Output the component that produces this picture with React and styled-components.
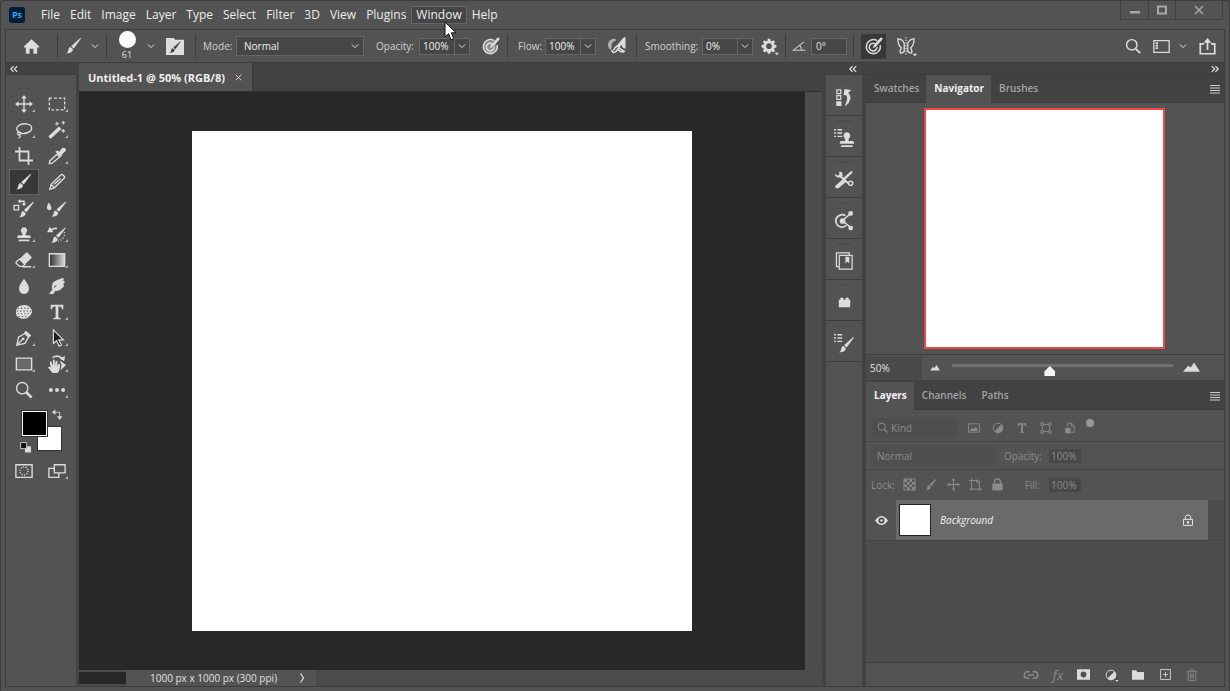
import { useState } from "react"
import styled, { createGlobalStyle } from "styled-components"

const GlobalStyle = createGlobalStyle`
    * { box-sizing: border-box; }
    body {
        margin: 0;
        background: #535353;
        color: #e0e0e0;
        font-family: "Open Sans", "Noto Sans", sans-serif;
        font-size: 10px;
    }
    button, input, select {
        font: inherit;
        color: inherit;
        margin: 0;
        padding: 0;
        border: none;
        border-radius: 0;
        background: none;
        outline: none;
    }
    svg { display: block; flex: none; overflow: visible; }
`

const AppWindow = styled.div`
    display: flex;
    flex-direction: column;
    height: 100vh;
    min-height: 620px;
    background: #535353;
    border: 1px solid #3c3c3c;
    border-bottom: none;
    border-radius: 3px 3px 0 0;
    overflow: hidden;
`

const TitleBar = styled.header`
    display: flex;
    align-items: center;
    height: 28px;
    flex: none;
    padding-left: 8px;
`

const PsLogo = styled.div`
    width: 16px;
    height: 16px;
    border-radius: 3px;
    background: #001e36;
    color: #31a8ff;
    font-size: 9px;
    font-weight: bold;
    line-height: 15px;
    text-align: center;
    margin-right: 11px;
`

const MenuBar = styled.nav`
    display: flex;
    flex: 1;
`

const MenuButton = styled.button`
    position: relative;
    height: 18px;
    padding: 0 4px;
    font-size: 12px;
    line-height: 16px;
    color: #ececec;
    border: 1px solid ${(props)=>props.$active ? "#666" : "transparent"};
    background: ${(props)=>props.$active ? "#464646" : "none"};
`

const Pointer = styled.svg`
    position: absolute;
    left: 32px;
    top: 14px;
    z-index: 5;
`

const WindowButtons = styled.div`
    display: flex;
    align-self: flex-start;
    margin-right: 6px;
    height: 19px;
    border: 1px solid #404040;
    border-top: none;
`

const WindowButton = styled.button`
    display: flex;
    align-items: center;
    justify-content: center;
    width: ${(props)=>props.$wide ? "47px" : "27px"};
    color: #a8a8a8;
    & + & { border-left: 1px solid #404040; }
`

const OptionsBar = styled.div`
    display: flex;
    align-items: center;
    height: 34px;
    flex: none;
    margin: 0 4px;
    padding-right: 8px;
    border: 1px solid #3c3c3c;
`

const OptionGroup = styled.div`
    display: flex;
    align-items: center;
    height: 24px;
    gap: ${(props)=>props.$gap || "8px"};
    padding: 0 ${(props)=>props.$pad || "8px"};
    & + & { border-left: 1px solid #3e3e3e; }
`

const Spacer = styled.div`
    flex: 1;
`

const IconButton = styled.button`
    display: flex;
    align-items: center;
    justify-content: center;
    flex: none;
    width: ${(props)=>props.$width || "auto"};
    color: ${(props)=>props.$dim ? "#8c8c8c" : "#dcdcdc"};
`

const PressedButton = styled(IconButton)`
    width: 25px;
    height: 25px;
    background: #383838;
`

const FxButton = styled(IconButton)`
    width: 20px;
    font-size: 13px;
    font-style: italic;
`

const BrushSize = styled.div`
    display: flex;
    flex-direction: column;
    align-items: center;
    width: 18px;
    font-size: 9px;
    line-height: 13px;
`

const BrushDot = styled.div`
    width: 17px;
    height: 17px;
    border-radius: 50%;
    background: white;
`

const Field = styled.div`
    display: flex;
    align-items: center;
    white-space: nowrap;
`

const FieldLabel = styled.label`
    width: ${(props)=>props.$width};
    text-align: ${(props)=>props.$end ? "right" : "left"};
    color: ${(props)=>props.$dim ? "#8c8c8c" : "#d0d0d0"};
`

const SelectBox = styled.div`
    display: flex;
    align-items: center;
    width: 128px;
    height: 20px;
    padding-right: 4px;
    background: #464646;
    border: 1px solid #666;
`

const SelectInput = styled.select`
    appearance: none;
    flex: 1;
    height: 18px;
    padding-left: 7px;
    color: #f0f0f0;
`

const NumberBox = styled.div`
    display: flex;
    width: 51px;
    height: 17px;
    border: 1px solid #666;
    background: #464646;
    input {
        width: 34px;
        padding-left: 3px;
        color: #f0f0f0;
    }
    button {
        flex: 1;
        border-left: 1px solid #666;
    }
`

const AngleInput = styled.input`
    width: 36px;
    height: 17px;
    padding-left: 4px;
    background: #464646;
    border: 1px solid #666;
`

const Workspace = styled.main`
    display: flex;
    flex: 1;
    min-height: 0;
    margin: 0 4px 4px;
    background: #424242;
    border: 1px solid #3c3c3c;
    border-top: none;
`

const SideColumn = styled.div`
    display: flex;
    flex-direction: column;
    flex: none;
    width: ${(props)=>props.$width};
    padding-left: ${(props)=>props.$gutter ? "4px" : "0"};
`

const CollapseStrip = styled.div`
    display: flex;
    justify-content: ${(props)=>props.$end ? "flex-end" : "flex-start"};
    align-items: center;
    height: 12px;
    flex: none;
    padding: 0 5px 0 4px;
    border-bottom: 1px solid #3a3a3a;
`

const ToolPanel = styled.div`
    flex: 1;
    padding: 16px 3px;
    background: #535353;
`

const ToolGrid = styled.div`
    display: grid;
    grid-template-columns: 30px 30px;
    grid-auto-rows: 26px;
    column-gap: 3px;
`

const ToolButton = styled.button`
    position: relative;
    display: flex;
    align-items: center;
    justify-content: center;
    color: #dcdcdc;
    background: ${(props)=>props.$active ? "#383838" : "none"};
    border: 1px solid ${(props)=>props.$active ? "#636363" : "transparent"};
    &::after {
        content: "";
        display: ${(props)=>props.$more ? "block" : "none"};
        position: absolute;
        right: 3px;
        bottom: 4px;
        border-left: 3px solid transparent;
        border-bottom: 3px solid #b4b4b4;
    }
`

const ColorWell = styled.div`
    position: relative;
    height: 44px;
    margin: 8px 0 3px;
`

const Swatch = styled.button`
    position: absolute;
    left: ${(props)=>props.$front ? "13px" : "28px"};
    top: ${(props)=>props.$front ? "0" : "15px"};
    z-index: ${(props)=>props.$front ? 1 : 0};
    width: 25px;
    height: 25px;
    background: ${(props)=>props.$color};
    border: 1px solid ${(props)=>props.$front ? "#fff" : "#333"};
    outline: ${(props)=>props.$front ? "1px solid #333" : "none"};
`

const SwapButton = styled(IconButton)`
    position: absolute;
    left: 43px;
    top: -2px;
`

const DefaultButton = styled(IconButton)`
    position: absolute;
    left: 11px;
    top: 31px;
`

const DocumentArea = styled.section`
    display: flex;
    flex-direction: column;
    flex: 1;
    min-width: 0;
    margin-left: 3px;
`

const DocumentTab = styled.div`
    display: flex;
    align-items: center;
    align-self: flex-start;
    gap: 10px;
    height: 28px;
    flex: none;
    padding: 0 10px 0 9px;
    background: #535353;
    border-right: 1px solid #3a3a3a;
    color: #f0f0f0;
    font-size: 11px;
    font-weight: 700;
    white-space: nowrap;
`

const CanvasRow = styled.div`
    display: flex;
    flex: 1;
    min-height: 0;
    border-top: 1px solid #303030;
`

const Pasteboard = styled.div`
    display: flex;
    align-items: center;
    justify-content: center;
    flex: 1;
    min-width: 0;
    overflow: hidden;
    background: #282828;
`

const Artboard = styled.div`
    width: 500px;
    height: 500px;
    flex: none;
    background: white;
`

const ScrollTrack = styled.div`
    width: 17px;
    background: #4d4d4d;
`

const StatusBar = styled.footer`
    display: flex;
    align-items: center;
    height: 16px;
    flex: none;
    background: #4b4b4b;
    color: #e0e0e0;
`

const ZoomCell = styled.div`
    width: 47px;
    height: 12px;
    background: #282828;
`

const StatusText = styled.div`
    display: flex;
    align-items: center;
    justify-content: space-between;
    width: 190px;
    height: 16px;
    padding: 0 9px 0 24px;
    background: #535353;
    white-space: nowrap;
`

const Dock = styled.div`
    flex: 1;
    background: #535353;
`

const DockButton = styled.button`
    display: flex;
    flex-direction: column;
    align-items: center;
    width: 100%;
    height: 41px;
    padding-top: 4px;
    gap: 7px;
    color: #dcdcdc;
    border-bottom: 1px solid #3c3c3c;
`

const Grip = styled.span`
    width: 16px;
    height: 2px;
    flex: none;
    border-top: 2px dotted #4a4a4a;
`

const Panel = styled.section`
    display: flex;
    flex-direction: column;
    flex: ${(props)=>props.$grow ? "1" : "none"};
    min-height: 0;
    margin-bottom: ${(props)=>props.$grow ? "0" : "2px"};
    background: #535353;
`

const TabRow = styled.div`
    display: flex;
    height: 28px;
    flex: none;
    background: #424242;
    border-bottom: 1px solid #3c3c3c;
`

const PanelTab = styled.button`
    height: 28px;
    padding: 0 7px 2px 8px;
    font-weight: ${(props)=>props.$active ? 700 : 600};
    color: ${(props)=>props.$active ? "#f2f2f2" : "#a4a4a4"};
    background: ${(props)=>props.$active ? "#535353" : "none"};
`

const PanelMenu = styled(IconButton)`
    margin-left: auto;
    width: 19px;
`

const Preview = styled.div`
    display: flex;
    justify-content: center;
    padding: 5px 2px 5px 0;
`

const PreviewBox = styled.div`
    width: 241px;
    height: 241px;
    background: white;
    border: 2px solid #f24646;
`

const ZoomRow = styled.div`
    display: flex;
    align-items: center;
    height: 26px;
    border-top: 1px solid #3e3e3e;
    padding-right: 24px;
`

const ZoomInput = styled.input`
    width: 56px;
    height: 24px;
    margin-right: 8px;
    padding-left: 4px;
    background: #4a4a4a;
`

const ZoomSlider = styled.input`
    appearance: none;
    flex: 1;
    min-width: 0;
    height: 18px;
    margin: 0 10px 4px 12px;
    &::-webkit-slider-runnable-track {
        height: 3px;
        background: #717171;
    }
    &::-webkit-slider-thumb {
        appearance: none;
        width: 11px;
        height: 10px;
        margin-top: 2px;
        background: #f4f4f4;
        clip-path: polygon(50% 0, 100% 55%, 100% 100%, 0 100%, 0 55%);
    }
`

const LayerControls = styled.div`
    display: flex;
    align-items: center;
    height: ${(props)=>props.$height};
    flex: none;
    gap: 9px;
    padding: ${(props)=>props.$first ? "4px" : "0"} 5px 0;
    color: #8c8c8c;
    border-bottom: 1px solid ${(props)=>props.$last ? "transparent" : "#434343"};
`

const KindSearch = styled.div`
    display: flex;
    align-items: center;
    width: 86px;
    height: 20px;
    gap: 3px;
    padding-left: 6px;
    background: #4e4e4e;
    input {
        width: 60px;
        &::placeholder { color: #8c8c8c; }
    }
`

const BlendSelect = styled.select`
    appearance: none;
    width: 124px;
    height: 20px;
    padding-left: 6px;
    background: #4f4f4f;
`

const DimNumber = styled.input`
    width: 32px;
    height: 14px;
    padding-left: 2px;
    background: #484848;
`

const FilterToggle = styled.button`
    width: 8px;
    height: 8px;
    margin-bottom: 9px;
    border-radius: 50%;
    background: #999;
`

const LayerList = styled.div`
    flex: 1;
    min-height: 0;
    background: #4d4d4d;
`

const LayerRow = styled.div`
    display: flex;
    height: 41px;
    padding-right: 16px;
    border-bottom: 1px solid #444;
`

const EyeButton = styled(IconButton)`
    background: #535353;
`

const LayerCell = styled.div`
    display: flex;
    align-items: center;
    flex: 1;
    gap: 9px;
    padding: 0 14px 0 3px;
    background: #6a6a6a;
    color: #f2f2f2;
    font-style: italic;
    svg { margin-left: auto; }
`

const LayerThumb = styled.div`
    width: 32px;
    height: 32px;
    background: white;
    border: 1px solid #222;
`

const LayerFooter = styled.div`
    display: flex;
    align-items: center;
    justify-content: flex-end;
    gap: 9px;
    height: 24px;
    flex: none;
    padding-right: 26px;
    border-top: 1px solid #3e3e3e;
`

/* every drawing sits on a 20 x 20 grid */
const line = { fill: "none", stroke: "currentColor", strokeWidth: 1.5 }
const brush = <><path d="M18 1.500 L9.800 12.800 L6.800 10.300 L16.500 1.700 Q17.700 .8 18 1.500Z"/><path d="M5.900 11.200 L8.900 13.700 Q8.600 18 1.500 18.300 Q3.600 16.900 3.800 14 Q4 11.600 5.900 11.200Z"/></>
const stamp = <><path d="M10 2.500a3.500 3.500 0 0 1 2.500 6q-1 1.300-.7 3h4q1.700 0 1.700 1.800v1.200H2.500v-1.200q0-1.800 1.700-1.800h4q.3-1.700-.7-3a3.500 3.500 0 0 1 2.500-6Z"/><path d="M4 16h12v2H4z"/></>
const miniList = <path d="M-1 0h2v1.500h-2zM2.500 0h5v1.500h-5zM-1 3.500h2V5h-2zM2.500 3.500h5V5h-5zM-1 7h2v1.500h-2zM2.500 7h5v1.500h-5z"/>
const more = <path d="M17 18.500h5.500l-2.700 3z"/>
const adjust = <><circle cx="10" cy="10" r="8" {...line}/><path d="M16 4A8 8 0 1 1 4 16Z"/></>
const target = <><path {...line} strokeWidth="1.700" d="M13.500 4.100A7.800 7.800 0 1 0 16.900 9M11 7.300A4.300 4.300 0 1 0 13.400 11"/><path d="M18.900 .8q1.200 1 .3 2.200L12 10.800l-3.500 1.700 1.300-3.700L16.900 1.100q1-1 2-.3Z"/></>

const drawings = {
    home: <path d="M10 1.500 L19 10 V11.200 H16.700 V18.500 H12.200 V12.500 H7.800 V18.500 H3.300 V11.200 H1 V10Z"/>,
    brush,
    brushFolder: <><path d="M0 1h9l1 2h10v17H0z"/><g transform="translate(3 4) scale(.75)" fill="#404040">{brush}</g></>,
    target,
    targetFilled: <><circle cx="9" cy="11.500" r="7.500" opacity=".4"/>{target}</>,
    airbrush: <><path d="M8 2Q1 2 0 8q0 5 3 6 1-1 1-4 0-5 5-6Z" opacity=".7"/><path {...line} strokeWidth="1.700" d="M4 14q1 5 5 2l9-14M10 10q-3 2-4 5m6-3 6 4q-2 2-7-2"/><path d="M18 0q2 0 1.500 2v11l-3-1-2-4-3 4-2-2L16 2Z"/></>,
    gear: <><path fillRule="evenodd" d="M8.500 1h3l.5 2.300 1.600.7 2-1.300 2 2.100-1.300 2 .7 1.600 2.300.5v3l-2.300.5-.7 1.600 1.300 2-2 2-2-1.300-1.600.7-.5 2.300h-3L8 17.400l-1.600-.7-2 1.300-2-2 1.200-2-.7-1.600L.7 11.900v-3L3 8.400l.7-1.600-1.300-2 2-2.100 2 1.300 1.600-.7ZM10 6.700a3.500 3.500 0 1 0 0 7 3.500 3.500 0 0 0 0-7Z"/>{more}</>,
    angle: <path {...line} d="M17 4 2 16h17M10 9q4 2 3 7"/>,
    butterfly: <><path {...line} strokeWidth="1.500" d="M8 16Q3 20 3.500 15.500L4.700 12Q2 10 1.500 6.500L1 2q5 0 7 5zM12 16q5 4 4.500-.5L15.300 12Q18 10 18.500 6.500L19 2q-5 0-7 5z"/><path {...line} strokeDasharray="1.500 1.500" d="M10 0v20"/>{more}</>,
    search: <><circle cx="8.500" cy="8.500" r="6.500" {...line} strokeWidth="1.800"/><path {...line} strokeWidth="2.300" d="m13.500 13.500 5.500 5.500"/></>,
    layout: <><path {...line} d="M1 3h18v14H1z"/><path d="M3 5h3v2H3zM3 8h3v2H3zM3 11h3v2H3z"/></>,
    share: <><path {...line} strokeWidth="2" d="M6 7H1.500v11.500h17V7H14M10 14V3"/><path d="m10 0 4.500 5.500h-9z"/></>,
    move: <><path {...line} d="M10 3v14M3 10h14"/><path d="m10 0 3 4H7zM10 20l3-4H7zM0 10l4-3v6zM20 10l-4-3v6z"/></>,
    marquee: <path {...line} strokeDasharray="3.200 2" d="M1.500 3.500h17v13h-17z"/>,
    lasso: <path {...line} d="M5 13Q-.5 9 3.500 5.500C8 1.500 18 2.500 18.500 7.500c.5 5-9 8-13.500 5.500Q2.500 12 3 14.500q1.500 2 3 0 1-2-1-2m0 3q2 2-1 3.500"/>,
    wand: <><path d="m12 6 3 3L4 19q-1.500 1-2.700-.5T1.500 16z"/><path {...line} strokeWidth="1.200" d="M10 1v4M8 3h4M17 0v4M15 2h4M17 9v4M15 11h4"/></>,
    crop: <path {...line} strokeWidth="2" d="M5 0v15h15M0 5h15v15"/>,
    eyedropper: <><path {...line} d="m10 8 3 3-8.500 7-3 .5.500-3Z"/><path d="m11 4 5 5-2 2-6-6ZM12 6l3-4q2-2 4-.500t0 3.500l-4 4Z"/></>,
    pencil: <path {...line} d="m2 18 1.500-5.500L14.500 2q1-.8 2 .2l1.500 1.500q1 1 0 2L7 16.500Zm1.500-5.500L7 16.500M7 12.500l7-6.500"/>,
    replaceBrush: <><g transform="translate(3 2)">{brush}</g><path {...line} d="M-1 7h5v5h-5zM5 2.500h5V6"/><path d="m3 2.500 3-2.500v5zM7.500 5h5L10 8z"/></>,
    mixer: <><g transform="translate(2.500 1.500)">{brush}</g><path d="M1 4Q5 10 3.500 11.500q-2 2-4 0T1 4Z"/></>,
    stamp,
    history: <><g transform="translate(2 1.500)">{brush}</g><path {...line} strokeWidth="2" d="M2 6.500Q6 3 10 4"/><path d="m-1 8 3-6 4 6z"/><path {...line} strokeDasharray="1.200 2" d="M18 8q2 7-7 10"/></>,
    eraser: <><path d="m5 9 7-7q1-1 2 0l4 4q1 1 0 2l-7 7Z"/><path {...line} d="m5 9 6 6-2.500 2H5l-3.500-3q-1-1 0-2zM8 17.500h10"/></>,
    gradient: <><defs><linearGradient id="ramp"><stop stopColor="#303030"/><stop offset="1" stopColor="#d8d8d8"/></linearGradient></defs><path d="M1.500 3h17v14h-17z" fill="url(#ramp)" stroke="currentColor" strokeWidth="1.500"/></>,
    drop: <path d="M10 2Q17 11 15.300 15t-5.300 4-5.300-4T10 2Z"/>,
    smudge: <path d="m4 13 1-6q1-2 4-3l7-3q2 0 1.500 2L15 5l2-1q2 0 1.500 2l-2 2 1 .5q1 1-.5 2.500l-3 3q-2 2-6 1.500L6 19H1l4-5 5-5-3 1-1 4Z"/>,
    sponge: <><path d="M6 3q7-2 11 2 4 5 0 9-4 5-11 3Q0 15 1 9q1-5 5-6Z"/><path stroke="#535353" strokeWidth="1.200" strokeDasharray="1.200 2.500" d="M3 6h14M2 9h17M3 12h16M4 15h13"/></>,
    type: <path d="M3 2h14v5h-1.300q-.5-3-2.500-3h-1.700v11.500q0 1.200 2.500 1.300v1.200H6v-1.200q2.500-.1 2.500-1.300V4H6.800q-2 0-2.500 3H3z"/>,
    pen: <><path {...line} d="m2 18 2-9 7-4 4 4-4 7Zm0 0 6-6"/><path d="m12 2 6 5-2 2.500-6-5.500z"/><circle cx="9" cy="11" r="1.500"/></>,
    arrow: <path d="M6 1v15l3.500-3 3 6 2.500-1.200-3-5.800h5Z" fill="#202020" stroke="#dcdcdc" strokeWidth="1.300"/>,
    rectangle: <path {...line} fill="#696969" d="M1.500 3.500h17v13h-17z"/>,
    hand: <><path d="M5 20 0 14q1-2 3 0L2 8q1-2 2 0l1.500 4V6q1-2 2 0v6l1-5q2-1 2 0v6l1-3q2-1 2 1-.5 7-3 9Z"/><path {...line} strokeWidth="1.800" d="M5 3q6-4 11 1"/><path d="m19 1-1 6-5-3ZM13 6l7 5-6 6 1-6Z"/></>,
    zoom: <><circle cx="8" cy="8" r="6.300" {...line}/><path {...line} strokeWidth="2.800" d="m12.500 12.500 6 6"/></>,
    dots: <><circle cx="3.200" cy="10" r="2.200"/><circle cx="10" cy="10" r="2.200"/><circle cx="16.800" cy="10" r="2.200"/></>,
    quickMask: <><path {...line} d="M1 3h18v14H1z"/><circle cx="10" cy="10" r="4.500" {...line} strokeDasharray="1.300 1.500"/></>,
    screens: <><path {...line} d="M7 3h12v9H7z"/><path {...line} d="M7 7H1v10h11v-5"/></>,
    swap: <><path {...line} d="M5 6h9v9"/><path d="m0 6 6-5v10zM9 13h10l-5 7z"/></>,
    defaults: <><path fill="#dcdcdc" d="M9 8h11v11H9z"/><path fill="#111" stroke="#dcdcdc" strokeWidth="1.500" d="M1 1h11v11H1z"/></>,
    actions: <><path {...line} strokeWidth="1.300" d="M2 2h4v4H2zM2 8h4v4H2z"/><path d="M1.300 14h5.500v5H1.300zM9 7l1-6 7 1-3 3q6 7-3 14-1 0 0-2 3-6 1-9Z"/></>,
    cloneSource: <><g transform="translate(2.500 1)">{stamp}</g>{miniList}</>,
    presets: <><path d="M0 17 9 9l3 3-8 7q-2 1-3 0t-1-2ZM17 1l2 1-9 9-2-2Z"/><path {...line} strokeWidth="2" d="m5 6 9 8"/><circle cx="16.500" cy="14" r="2.200" {...line}/><path d="M4 2q4-1 4 3 0 3-4 3T0 4l3 2 2-2Z"/></>,
    graph: <><path {...line} strokeWidth="1.800" d="M11 5a6.500 6.500 0 1 0 1 10"/><circle cx="8" cy="10.500" r="3"/><circle cx="16.500" cy="2.500" r="2.500"/><circle cx="16.500" cy="18" r="2.500"/><path {...line} d="m8 10 8-7M9 11l7 6"/></>,
    book: <><path {...line} strokeWidth="1.300" d="M4.500 3.500H18V18H4.500z"/><path {...line} strokeWidth="1.300" d="M4 15.500H1.500V1H15v2"/><path d="M11 5h4v7l-2-2-2 2z"/></>,
    plugin: <path d="M4 7h1.500V5.500q2-1.500 3.500 0V7h2V5.500q2-1.500 3.500 0V7H16v8H4z"/>,
    brushSettings: <><g transform="translate(3 2) scale(.95)">{brush}</g>{miniList}</>,
    image: <><path {...line} d="M1 3h18v14H1z"/><path d="m3 15 4-6 3 3 3-4 4 7z"/></>,
    adjust,
    adjustMenu: <>{adjust}{more}</>,
    shape: <><path {...line} d="M4 4h12v12H4z"/><path fill="#535353" stroke="currentColor" strokeWidth="1.500" d="M1.500 1.500h4v4h-4zM14.500 1.500h4v4h-4zM1.500 14.500h4v4h-4zM14.500 14.500h4v4h-4z"/></>,
    smart: <><path {...line} d="M6 8V2h7l4 4v11h-6M12 2v5h5"/><path d="M2 10h9v9H2z"/></>,
    checker: <><path {...line} d="M1.500 1.500h17v17h-17z"/><path d="M2 2h4v4H2zM10 2h4v4h-4zM6 6h4v4H6zM14 6h4v4h-4zM2 10h4v4H2zM10 10h4v4h-4zM6 14h4v4H6zM14 14h4v4h-4z"/></>,
    artboard: <path {...line} d="M4 0v20M0 4h15M0 17h20M16 5v15M12 2v5h4"/>,
    lock: <><path {...line} strokeWidth="2" d="M5.500 9V6q0-4.500 4.500-4.500T14.500 6v3"/><path d="M2 8.500h16V19H2z"/></>,
    lockOpen: <><path {...line} d="M5.500 9V6q0-4.500 4.500-4.500T14.500 6v3M2.500 9h15v10h-15z"/><path d="M8.500 12h3v4h-3z"/></>,
    eye: <><path d="M0 10q10-14 20 0-10 14-20 0Z"/><circle cx="10" cy="10" r="4.500" fill="#484848"/><circle cx="10" cy="10" r="2"/></>,
    link: <path {...line} strokeWidth="1.800" d="M8 6H5.500a4 4 0 0 0 0 8H8M12 6h2.500a4 4 0 0 1 0 8H12M6 10h8"/>,
    mask: <path fillRule="evenodd" d="M0 2h20v16H0zM10 5.500a4.500 4.500 0 1 0 0 9 4.500 4.500 0 0 0 0-9Z"/>,
    folder: <path d="M0 2h7l2 3h11v13H0z"/>,
    plus: <path {...line} d="M1 1h18v18H1zM10 5.500v9M5.500 10h9"/>,
    trash: <path {...line} d="M1 4.500h18M7 4V1.500h6V4M3.500 5v14h13V5M7.500 8v8M10 8v8M12.500 8v8"/>,
    chevron: <path {...line} strokeWidth="2.500" d="m2 6 8 8 8-8"/>,
    left: <path {...line} strokeWidth="3" d="m9 3-7 7 7 7M18 3l-7 7 7 7"/>,
    right: <path {...line} strokeWidth="3" d="m2 3 7 7-7 7M11 3l7 7-7 7"/>,
    burger: <path {...line} strokeWidth="1.800" d="M0 3h20M0 8h20M0 13h20M0 18h20"/>,
    cross: <path {...line} strokeWidth="3" d="m2 2 16 16M18 2 2 18"/>,
    thinCross: <path {...line} strokeWidth="2.500" d="m2 2 16 16M18 2 2 18"/>,
    minimise: <path d="M0 12h20v5H0z"/>,
    maximise: <path {...line} strokeWidth="4" d="M2 3h16v14H2z"/>,
    next: <path {...line} strokeWidth="2.500" d="m7 1 6 9-6 9"/>,
    hills: <path d="m0 15 6-7 3 2 4-6 7 11z"/>,
}

const Icon = ({ name, size = 18 }) => (
    <svg width={size} height={size} viewBox="0 0 20 20" fill="currentColor" aria-hidden="true">
        {drawings[name]}
    </svg>
)

const menus = ["File", "Edit", "Image", "Layer", "Type", "Select", "Filter", "3D", "View", "Plugins", "Window", "Help"]

const tools = [
    ["move", 1], ["marquee", 1],
    ["lasso", 1], ["wand", 1],
    ["crop", 0], ["eyedropper", 1],
    ["brush", 0], ["pencil", 0],
    ["replaceBrush", 0], ["mixer", 0],
    ["stamp", 1], ["history", 1],
    ["eraser", 1], ["gradient", 1],
    ["drop", 0], ["smudge", 0],
    ["sponge", 0], ["type", 1],
    ["pen", 1], ["arrow", 1],
    ["rectangle", 1], ["hand", 1],
    ["zoom", 0], ["dots", 1],
]

const dockItems = ["actions", "cloneSource", "presets", "graph", "book", "plugin", "brushSettings"]

const PercentField = ({ id, label, width, value }) => (
    <Field>
        <FieldLabel htmlFor={id} $width={width}>{label}</FieldLabel>
        <NumberBox>
            <input id={id} defaultValue={value}/>
            <IconButton aria-label={label + " slider"}><Icon name="chevron" size={8}/></IconButton>
        </NumberBox>
    </Field>
)

const PanelTabs = ({ names, active }) => (
    <TabRow>
        {names.map((name) => <PanelTab key={name} $active={name === active}>{name}</PanelTab>)}
        <PanelMenu aria-label="Panel menu"><Icon name="burger" size={10}/></PanelMenu>
    </TabRow>
)

const App = () => {
    const [tool, setTool] = useState("brush")

    return (
        <>
            <GlobalStyle/>
            <AppWindow>
                <TitleBar>
                    <PsLogo>Ps</PsLogo>
                    <MenuBar>
                        {menus.map((name) => (
                            <MenuButton key={name} $active={name === "Window"}>
                                {name}
                                {name === "Window" &&
                                    <Pointer width="13" height="20" viewBox="0 0 13 20">
                                        <path d="M1 1v15l3.500-3.300 2.500 6 2.800-1.200-2.500-5.700H12Z" fill="#fff" stroke="#111"/>
                                    </Pointer>
                                }
                            </MenuButton>
                        ))}
                    </MenuBar>
                    <WindowButtons>
                        <WindowButton aria-label="Minimize"><Icon name="minimise" size={10}/></WindowButton>
                        <WindowButton aria-label="Maximize"><Icon name="maximise" size={10}/></WindowButton>
                        <WindowButton aria-label="Close" $wide><Icon name="cross" size={10}/></WindowButton>
                    </WindowButtons>
                </TitleBar>

                <OptionsBar>
                    <OptionGroup $pad="17px">
                        <IconButton aria-label="Home"><Icon name="home" size={17}/></IconButton>
                    </OptionGroup>
                    <OptionGroup $pad="7px">
                        <IconButton aria-label="Brush tool"><Icon name="brush" size={18}/></IconButton>
                        <IconButton aria-label="Tool presets"><Icon name="chevron" size={8}/></IconButton>
                    </OptionGroup>
                    <OptionGroup $gap="11px" $pad="11px">
                        <BrushSize><BrushDot/>61</BrushSize>
                        <IconButton aria-label="Brush presets"><Icon name="chevron" size={8}/></IconButton>
                        <IconButton aria-label="Brush settings"><Icon name="brushFolder" size={18}/></IconButton>
                    </OptionGroup>
                    <OptionGroup $gap="12px" $pad="7px">
                        <Field>
                            <FieldLabel htmlFor="mode" $width="33px">Mode:</FieldLabel>
                            <SelectBox>
                                <SelectInput id="mode"><option>Normal</option></SelectInput>
                                <Icon name="chevron" size={8}/>
                            </SelectBox>
                        </Field>
                        <PercentField id="opacity" label="Opacity:" width="43px" value="100%"/>
                        <IconButton aria-label="Pressure for opacity"><Icon name="targetFilled" size={18}/></IconButton>
                    </OptionGroup>
                    <OptionGroup $gap="12px" $pad="10px">
                        <PercentField id="flow" label="Flow:" width="27px" value="100%"/>
                        <IconButton aria-label="Airbrush"><Icon name="airbrush" size={18}/></IconButton>
                    </OptionGroup>
                    <OptionGroup>
                        <PercentField id="smoothing" label="Smoothing:" width="57px" value="0%"/>
                        <IconButton aria-label="Smoothing options"><Icon name="gear" size={16}/></IconButton>
                    </OptionGroup>
                    <OptionGroup $gap="5px" $pad="6px">
                        <FieldLabel htmlFor="angle" aria-label="Angle"><Icon name="angle" size={14}/></FieldLabel>
                        <AngleInput id="angle" defaultValue="0°"/>
                    </OptionGroup>
                    <OptionGroup $gap="11px" $pad="7px">
                        <PressedButton aria-label="Pressure for size"><Icon name="target" size={18}/></PressedButton>
                        <IconButton aria-label="Symmetry"><Icon name="butterfly" size={18}/></IconButton>
                    </OptionGroup>
                    <Spacer/>
                    <IconButton aria-label="Search"><Icon name="search" size={16}/></IconButton>
                    <OptionGroup $gap="9px" $pad="12px">
                        <IconButton aria-label="Workspace"><Icon name="layout" size={17}/></IconButton>
                        <IconButton aria-label="Choose workspace"><Icon name="chevron" size={8}/></IconButton>
                    </OptionGroup>
                    <IconButton aria-label="Share"><Icon name="share" size={17}/></IconButton>
                </OptionsBar>

                <Workspace>
                    <SideColumn $width="70px">
                        <CollapseStrip><Icon name="left" size={8}/></CollapseStrip>
                        <ToolPanel>
                            <ToolGrid>
                                {tools.map(([name, more]) => (
                                    <ToolButton key={name} aria-label={name} $more={more} $active={name === tool} onClick={() => setTool(name)}>
                                        <Icon name={name} size={18}/>
                                    </ToolButton>
                                ))}
                            </ToolGrid>
                            <ColorWell>
                                <Swatch aria-label="Foreground color" $front $color="#000"/>
                                <Swatch aria-label="Background color" $color="#fff"/>
                                <SwapButton aria-label="Swap colors"><Icon name="swap" size={11}/></SwapButton>
                                <DefaultButton aria-label="Default colors"><Icon name="defaults" size={11}/></DefaultButton>
                            </ColorWell>
                            <ToolGrid>
                                <ToolButton aria-label="Quick mask"><Icon name="quickMask" size={18}/></ToolButton>
                                <ToolButton aria-label="Screen mode" $more><Icon name="screens" size={18}/></ToolButton>
                            </ToolGrid>
                        </ToolPanel>
                    </SideColumn>

                    <DocumentArea>
                        <DocumentTab>
                            Untitled-1 @ 50% (RGB/8)
                            <IconButton aria-label="Close document"><Icon name="thinCross" size={7}/></IconButton>
                        </DocumentTab>
                        <CanvasRow>
                            <Pasteboard><Artboard/></Pasteboard>
                            <ScrollTrack/>
                        </CanvasRow>
                        <StatusBar>
                            <ZoomCell/>
                            <StatusText>1000 px x 1000 px (300 ppi)<Icon name="next" size={10}/></StatusText>
                        </StatusBar>
                    </DocumentArea>

                    <SideColumn $width="40px" $gutter>
                        <CollapseStrip $end><Icon name="left" size={8}/></CollapseStrip>
                        <Dock>
                            {dockItems.map((name) => (
                                <DockButton key={name} aria-label={name}><Grip/><Icon name={name} size={19}/></DockButton>
                            ))}
                        </Dock>
                    </SideColumn>

                    <SideColumn $width="362px" $gutter>
                        <CollapseStrip $end><Icon name="right" size={8}/></CollapseStrip>
                        <Panel>
                            <PanelTabs names={["Swatches", "Navigator", "Brushes"]} active="Navigator"/>
                            <Preview><PreviewBox/></Preview>
                            <ZoomRow>
                                <ZoomInput aria-label="Zoom" defaultValue="50%"/>
                                <IconButton aria-label="Zoom out"><Icon name="hills" size={10}/></IconButton>
                                <ZoomSlider type="range" aria-label="Zoom level" defaultValue="44"/>
                                <IconButton aria-label="Zoom in"><Icon name="hills" size={17}/></IconButton>
                            </ZoomRow>
                        </Panel>
                        <Panel $grow>
                            <PanelTabs names={["Layers", "Channels", "Paths"]} active="Layers"/>
                            <LayerControls $height="32px" $first>
                                <KindSearch>
                                    <Icon name="search" size={11}/>
                                    <input aria-label="Filter layers" placeholder="Kind"/>
                                </KindSearch>
                                {["image", "adjust", "type", "shape", "smart"].map((name) => (
                                    <IconButton key={name} aria-label={name} $width="15px" $dim><Icon name={name} size={12}/></IconButton>
                                ))}
                                <FilterToggle aria-label="Toggle filter"/>
                            </LayerControls>
                            <LayerControls $height="28px">
                                <BlendSelect aria-label="Blend mode"><option>Normal</option></BlendSelect>
                                <FieldLabel htmlFor="layer-opacity" $width="36px" $dim>Opacity:</FieldLabel>
                                <DimNumber id="layer-opacity" defaultValue="100%"/>
                            </LayerControls>
                            <LayerControls $height="30px" $last>
                                <FieldLabel as="span" $width="23px" $dim>Lock:</FieldLabel>
                                {["checker", "brush", "move", "artboard", "lock"].map((name) => (
                                    <IconButton key={name} aria-label={"Lock " + name} $dim><Icon name={name} size={13}/></IconButton>
                                ))}
                                <FieldLabel htmlFor="fill" $width="27px" $end $dim>Fill:</FieldLabel>
                                <DimNumber id="fill" defaultValue="100%"/>
                            </LayerControls>
                            <LayerList>
                                <LayerRow>
                                    <EyeButton aria-label="Layer visibility" $width="30px"><Icon name="eye" size={13}/></EyeButton>
                                    <LayerCell>
                                        <LayerThumb/>
                                        Background
                                        <Icon name="lockOpen" size={12}/>
                                    </LayerCell>
                                </LayerRow>
                            </LayerList>
                            <LayerFooter>
                                <IconButton aria-label="Link layers" $dim><Icon name="link" size={16}/></IconButton>
                                <FxButton aria-label="Layer style" $dim>fx</FxButton>
                                <IconButton aria-label="Add mask"><Icon name="mask" size={13}/></IconButton>
                                <IconButton aria-label="Adjustment layer" $width="24px"><Icon name="adjustMenu" size={12}/></IconButton>
                                <IconButton aria-label="New group"><Icon name="folder" size={12}/></IconButton>
                                <IconButton aria-label="New layer" $width="24px"><Icon name="plus" size={11}/></IconButton>
                                <IconButton aria-label="Delete layer" $dim><Icon name="trash" size={12}/></IconButton>
                            </LayerFooter>
                        </Panel>
                    </SideColumn>
                </Workspace>
            </AppWindow>
        </>
    )
}

export default App
